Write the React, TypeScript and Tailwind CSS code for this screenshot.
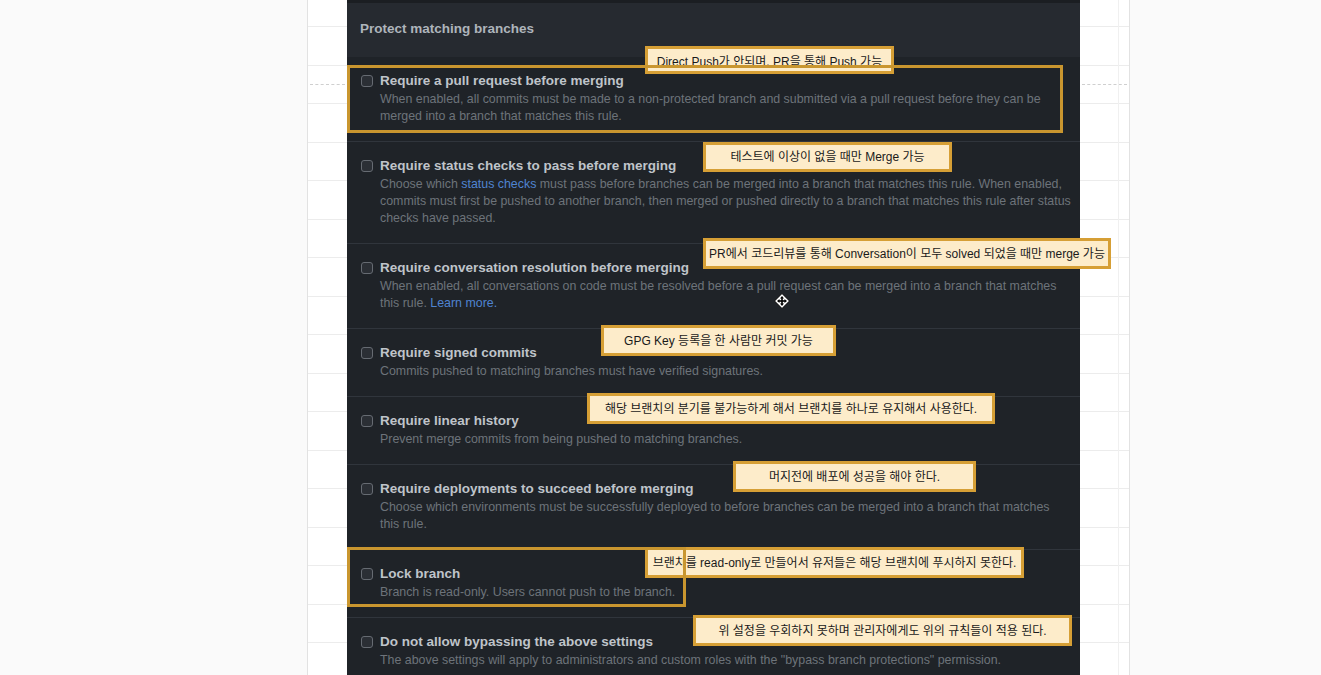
import React from 'react';

type Rule = {
  title: string;
  desc: React.ReactNode;
};

const rules: Rule[] = [
  {
    title: 'Require a pull request before merging',
    desc: 'When enabled, all commits must be made to a non-protected branch and submitted via a pull request before they can be merged into a branch that matches this rule.',
  },
  {
    title: 'Require status checks to pass before merging',
    desc: (
      <>
        Choose which <span className="text-[#4f83d1]">status checks</span> must pass before branches can be merged into a
        branch that matches this rule. When enabled, commits must first be pushed to another branch, then merged or pushed
        directly to a branch that matches this rule after status checks have passed.
      </>
    ),
  },
  {
    title: 'Require conversation resolution before merging',
    desc: (
      <>
        When enabled, all conversations on code must be resolved before a pull request can be merged into a branch that
        matches this rule. <span className="text-[#4f83d1]">Learn more.</span>
      </>
    ),
  },
  {
    title: 'Require signed commits',
    desc: 'Commits pushed to matching branches must have verified signatures.',
  },
  {
    title: 'Require linear history',
    desc: 'Prevent merge commits from being pushed to matching branches.',
  },
  {
    title: 'Require deployments to succeed before merging',
    desc: 'Choose which environments must be successfully deployed to before branches can be merged into a branch that matches this rule.',
  },
  {
    title: 'Lock branch',
    desc: 'Branch is read-only. Users cannot push to the branch.',
  },
  {
    title: 'Do not allow bypassing the above settings',
    desc: 'The above settings will apply to administrators and custom roles with the "bypass branch protections" permission.',
  },
];

const notes = [
  { text: 'Direct Push가 안되며, PR을 통해 Push 가능', cls: 'left-[645px] top-[46px] w-[249px] h-[28px] pt-[3px]' },
  { text: '테스트에 이상이 없을 때만 Merge 가능', cls: 'left-[703px] top-[142px] w-[249px] h-[30px]' },
  { text: 'PR에서 코드리뷰를 통해 Conversation이 모두 solved 되었을 때만 merge 가능', cls: 'left-[703px] top-[238px] w-[408px] h-[31px]' },
  { text: 'GPG Key 등록을 한 사람만 커밋 가능', cls: 'left-[601px] top-[325px] w-[235px] h-[31px]' },
  { text: '해당 브랜치의 분기를 불가능하게 해서 브랜치를 하나로 유지해서 사용한다.', cls: 'left-[587px] top-[393px] w-[408px] h-[31px]' },
  { text: '머지전에 배포에 성공을 해야 한다.', cls: 'left-[733px] top-[461px] w-[243px] h-[31px]' },
  { text: '브랜치를 read-only로 만들어서 유저들은 해당 브랜치에 푸시하지 못한다.', cls: 'left-[645px] top-[547px] w-[379px] h-[31px]' },
  { text: '위 설정을 우회하지 못하며 관리자에게도 위의 규칙들이 적용 된다.', cls: 'left-[693px] top-[615px] w-[379px] h-[31px]' },
];

const Gutter = ({ className, inner }: { className: string; inner?: boolean }) => (
  <div className={`relative shrink-0 bg-white ${className}`}>
    <div className="h-[26px]" />
    {Array.from({ length: 17 }).map((_, i) => (
      <div key={i} className="h-[38.5px] border-t border-[#ececec]" />
    ))}
    <div className="absolute left-[2px] right-[2px] top-[84px] border-t border-dashed border-[#cfcfcf]" />
    {inner && <div className="absolute right-[10px] top-0 bottom-0 border-l border-[#f0f0f0]" />}
  </div>
);

const MoveCursor = () => (
  <svg width="16" height="16" viewBox="0 0 16 16" className="absolute left-[774px] top-[293px]">
    <path d="M8 0.5 L15.5 8 L8 15.5 L0.5 8 Z" fill="#fff" stroke="#000" strokeWidth="1" />
    <path d="M8 3 L10 5.5 H6 Z M8 13 L6 10.5 H10 Z M3 8 L5.5 6 V10 Z M13 8 L10.5 10 V6 Z" fill="#000" />
    <rect x="7.2" y="5" width="1.6" height="6" fill="#000" />
    <rect x="5" y="7.2" width="6" height="1.6" fill="#000" />
  </svg>
);

export default function App() {
  return (
    <div
      className="relative h-[675px] w-full overflow-hidden bg-[#fafafa] flex pl-[307px]"
      style={{ fontFamily: '"Liberation Sans", "Noto Sans CJK KR", sans-serif' }}
    >
      <Gutter className="w-[40px] border-l border-[#e2e2e2]" />

      <div className="w-[733px] shrink-0 bg-[#1f2328]">
        <div className="h-[57px] bg-[#262a30] border-t-[3px] border-[#1b1e22] px-[13px] pt-[16px]">
          <h2 className="text-[13.5px] font-bold text-[#aeb4bb] leading-5">Protect matching branches</h2>
        </div>
        {rules.map((rule, i) => (
          <div
            key={rule.title}
            className={`flex gap-[7px] pl-[14px] pr-[8px] pt-[14px] pb-[16px] ${i > 0 ? 'border-t border-[#30353c]' : ''}`}
          >
            <div className="mt-[4px] h-[12px] w-[12px] shrink-0 rounded-[3px] border border-[#666b72] bg-[#2b2f35]" />
            <div className="min-w-0">
              <div className="text-[13.5px] font-bold leading-5 text-[#bfc4ca]">{rule.title}</div>
              <p className="text-[12.4px] leading-[17px] text-[#6d737a]">{rule.desc}</p>
            </div>
          </div>
        ))}
      </div>

      <Gutter className="w-[50px] border-r border-[#e2e2e2]" inner />

      {notes.map((n) => (
        <div
          key={n.text}
          className={`absolute flex items-center justify-center border-[3px] border-[#d69f35] bg-[#fdecca] text-[12px] text-[#1a1a1a] whitespace-nowrap ${n.cls}`}
        >
          {n.text}
        </div>
      ))}

      <div className="absolute left-[347px] top-[65px] w-[716px] h-[68px] border-[3px] border-[#c9962f]" />
      <div className="absolute left-[347px] top-[547px] w-[339px] h-[60px] border-[3px] border-[#c9962f]" />

      <MoveCursor />
    </div>
  );
}
